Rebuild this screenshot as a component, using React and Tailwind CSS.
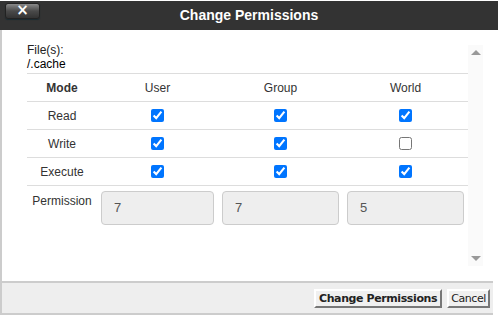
import React from 'react';

const rows = [
  { mode: 'Read', user: true, group: true, world: true },
  { mode: 'Write', user: true, group: true, world: false },
  { mode: 'Execute', user: true, group: true, world: true },
];

const Check = ({ checked }) => (
  <input
    type="checkbox"
    defaultChecked={checked}
    className="w-[13px] h-[13px] m-0 accent-[#0075ff]"
  />
);

const App = () => {
  return (
    <div className="w-[498px] h-[315px] flex flex-col bg-white overflow-hidden" style={{ fontFamily: '"Liberation Sans", Arial, sans-serif' }}>
      {/* title bar */}
      <div className="relative h-[29px] mt-px bg-[#333] flex items-center justify-center shrink-0">
        <button className="absolute left-[5px] top-[2px] w-[35px] h-[16px] rounded-[3px] border border-[#222] bg-gradient-to-b from-[#8a8a8a] via-[#4a4a4a] to-[#333] shadow-[0_1px_1px_#1a2a30] flex items-center justify-center">
          <span className="text-white font-bold text-[15px] leading-none -mt-px" style={{ fontFamily: '"DejaVu Sans", sans-serif' }}>×</span>
        </button>
        <h1 className="text-white font-bold text-[14px] -mt-[1px]">
          Change Permissions
        </h1>
      </div>

      {/* body */}
      <div className="flex-1 flex border-l-2 border-[#ccc]">
        <div className="flex-1 pl-[25px] pt-[13px]">
          <div className="text-[12px] leading-[14px] text-[#222]">
            <div>File(s):</div>
            <div className="text-black">/.cache</div>
          </div>
          <div className="mt-[2px] w-[441px] text-[12px] text-[#333]">
            <div className="grid grid-cols-[70px_121px_125px_125px] h-[28px] items-center border-t border-[#ddd]">
              <div className="text-center font-bold">Mode</div>
              <div className="text-center">User</div>
              <div className="text-center">Group</div>
              <div className="text-center">World</div>
            </div>
            {rows.map((r) => (
              <div key={r.mode} className="grid grid-cols-[70px_121px_125px_125px] h-[28px] items-center border-t border-[#ddd]">
                <div className="text-center">{r.mode}</div>
                <div className="flex justify-center"><Check checked={r.user} /></div>
                <div className="flex justify-center"><Check checked={r.group} /></div>
                <div className="flex justify-center"><Check checked={r.world} /></div>
              </div>
            ))}
            <div className="grid grid-cols-[70px_121px_125px_125px] border-t border-[#ddd] pt-[5px]">
              <div className="text-center pt-[1px]">Permission</div>
              {['7', '7', '5'].map((v, i) => (
                <div key={i} className="px-[4px]">
                  <div className="h-[34px] rounded-[4px] border border-[#ccc] bg-[#eee] flex items-center pl-[12px] text-[13px] text-[#555]">
                    {v}
                  </div>
                </div>
              ))}
            </div>
          </div>
        </div>
        {/* scrollbar */}
        <div className="w-[15px] mt-[15px] mb-[15px] mr-[15px] bg-[#fafafa] flex flex-col items-center justify-between py-[5px]">
          <div className="w-0 h-0 border-l-[5px] border-r-[5px] border-b-[5px] border-l-transparent border-r-transparent border-b-[#999]" />
          <div className="w-0 h-0 border-l-[5px] border-r-[5px] border-t-[5px] border-l-transparent border-r-transparent border-t-[#999]" />
        </div>
      </div>

      {/* footer */}
      <div className="h-[34px] shrink-0 border-t-2 border-b-2 border-l-2 border-[#ccc] bg-[#eee] flex items-center justify-end gap-[5px] pr-[3px] mr-[5px]" style={{ fontFamily: '"DejaVu Sans", Verdana, sans-serif' }}>
        <button className="h-[19px] px-[3px] bg-[#f0f0f0] border-2 border-t-white border-l-white border-b-[#777] border-r-[#777] text-[11px] font-bold text-[#222] leading-none tracking-[-0.4px]">
          Change Permissions
        </button>
        <button className="h-[19px] px-[2px] bg-[#f0f0f0] border-2 border-t-white border-l-white border-b-[#777] border-r-[#777] text-[11px] text-[#222] leading-none tracking-[-0.4px]">
          Cancel
        </button>
      </div>
    </div>
  );
};

export default App;
